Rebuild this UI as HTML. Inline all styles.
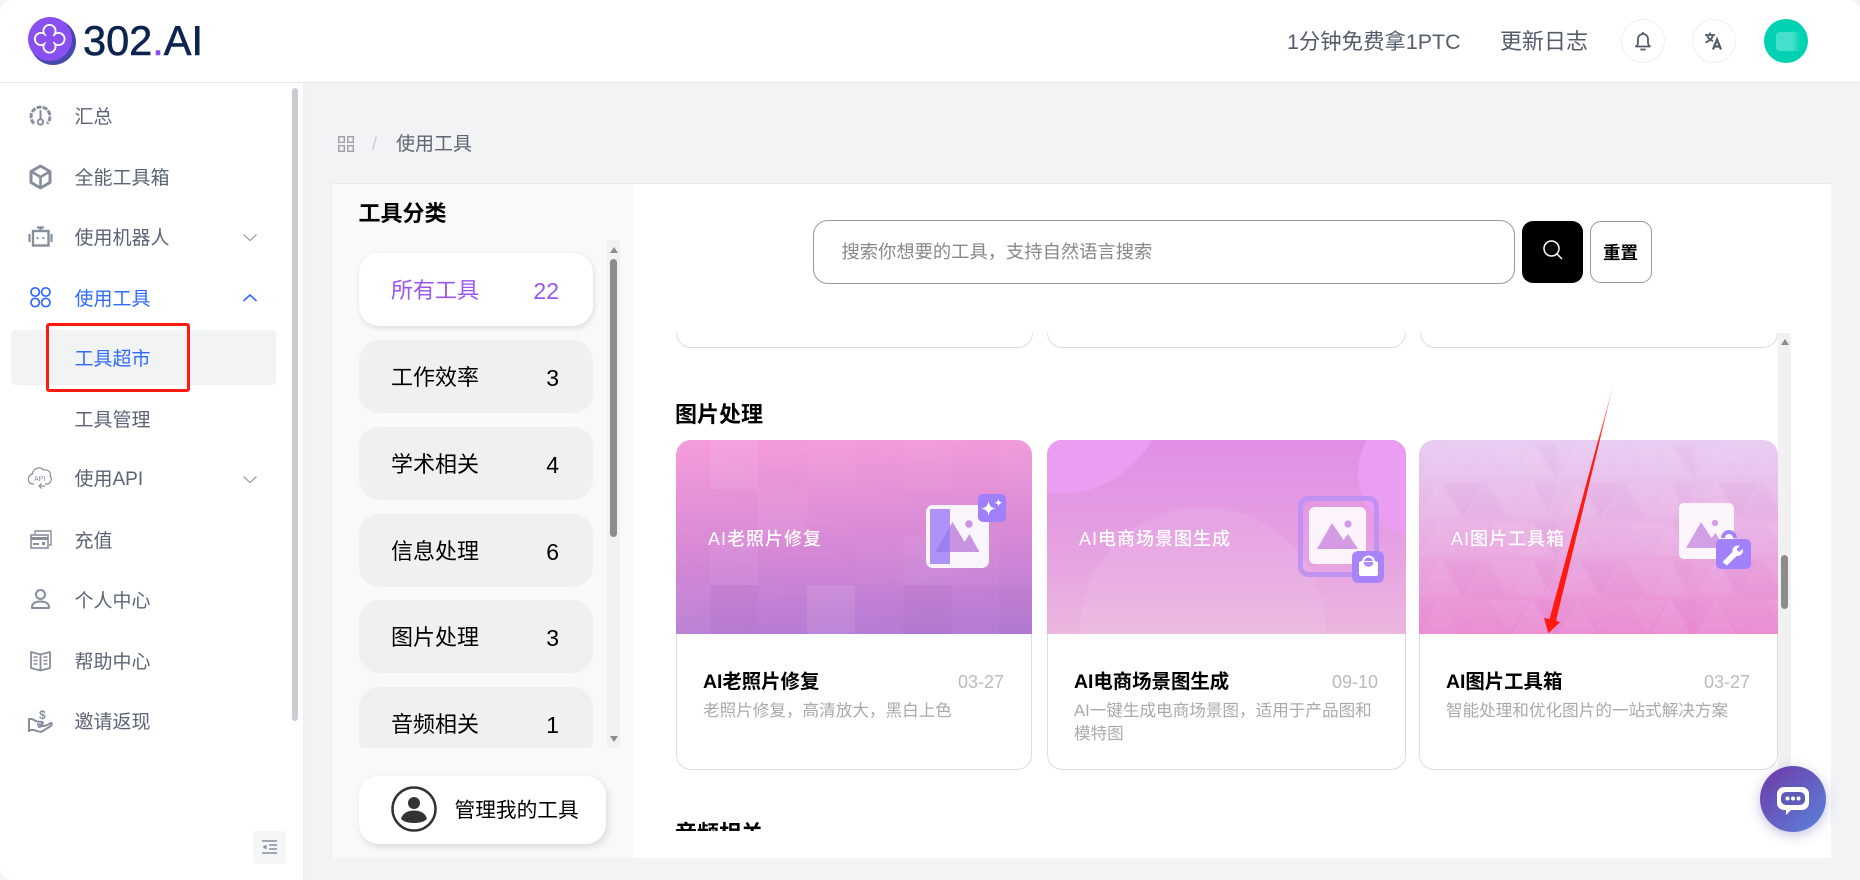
<!DOCTYPE html>
<html lang="zh-CN"><head><meta charset="utf-8"><title>302.AI</title>
<style>
*{box-sizing:border-box;margin:0;padding:0}
html,body{width:1860px;height:880px;overflow:hidden;background:#f2f3f5;font-family:"Liberation Sans","Noto Sans CJK SC",sans-serif}
.a{position:absolute;white-space:nowrap}
#hdr{left:0;top:0;width:1860px;height:83px;background:#fff;border-bottom:1px solid #e6e7ea;border-radius:12px 12px 0 0}
#side{left:0;top:83px;width:303px;height:797px;background:#fff;border-radius:0 0 0 12px}
.m{left:74.500px;font-size:19px;line-height:26px;color:#5b6474}
.blue{color:#2f6bff}
.ico{position:absolute;overflow:visible}
.cat{position:absolute;left:359px;width:234px;height:73px;border-radius:20px;background:#f0f0f0;color:#000;font-size:22px}
.cat b{font-weight:400;position:absolute;left:32px;top:22px;line-height:32px}
.cat i{font-style:normal;position:absolute;right:34px;top:22px;line-height:32px;font-size:23px}
.card{position:absolute;top:440px;height:330px;background:#fff;border-radius:15px;overflow:hidden}
.card::before{content:"";position:absolute;left:0;top:0;right:0;height:194px;border:1px solid rgba(215,215,215,.55);border-bottom:0;border-radius:15px 15px 0 0}
.card::after{content:"";position:absolute;left:0;top:194px;right:0;bottom:0;border:1px solid #dcdcdc;border-top:0;border-radius:0 0 15px 15px}
.card .t{position:absolute;left:27px;top:229px;font-size:19.400px;font-weight:700;line-height:26px;color:#000;white-space:nowrap}
.card .d{position:absolute;right:28px;top:229px;font-size:18px;line-height:26px;color:#bbb}
.card .p{position:absolute;left:27px;top:259px;right:20px;font-size:16.600px;line-height:23px;color:#aaa;white-space:normal}
.card svg{position:absolute;left:0;top:0}
.card .n{position:absolute;top:86px;font-size:18px;font-weight:500;line-height:26px;color:#fff;letter-spacing:1px;white-space:nowrap}
</style></head><body>

<div class="a" id="hdr"></div>
<svg class="ico" style="left:28px;top:17px" width="50" height="50" viewBox="28 17 50 50">
<circle cx="53" cy="42" r="23" fill="#4648ad"/><circle cx="50" cy="39" r="22" fill="#8a4ff0"/>
<g fill="#fff"><circle cx="49.500" cy="31" r="7"/><circle cx="41" cy="39" r="7"/><circle cx="58.500" cy="39" r="7"/><circle cx="49.500" cy="46.500" r="7"/></g>
<g fill="#8a4ff0"><circle cx="49.500" cy="31" r="5.200"/><circle cx="41" cy="39" r="5.200"/><circle cx="58.500" cy="39" r="5.200"/><circle cx="49.500" cy="46.500" r="5.200"/><circle cx="49.500" cy="39" r="5"/></g>
</svg>
<div class="a" style="left:83px;top:17px;font-size:41.500px;line-height:47px;color:#0d2350;-webkit-text-stroke:.6px #0d2350">302<span style="color:#8a4ff0;-webkit-text-stroke:.6px #8a4ff0">.</span>AI</div>

<div class="a" style="left:1287px;top:28px;font-size:21.400px;line-height:28px;color:#545c6b">1分钟免费拿1PTC</div>
<div class="a" style="left:1500px;top:27px;font-size:22px;line-height:30px;color:#545c6b">更新日志</div>
<div class="a" style="left:1621px;top:19px;width:44px;height:44px;border:1px solid #f0f0f2;border-radius:50%"></div>
<svg class="ico" style="left:1633px;top:31px" width="20" height="20" viewBox="0 0 20 20" fill="none" stroke="#545c6b" stroke-width="1.800"><path d="M3 15.500c1.400-1 2-2 2-4V8a5 5 0 0 1 10 0v3.500c0 2 .6 3 2 4z" stroke-linejoin="round"/><path d="M8 18.500h4" stroke-linecap="round"/><path d="M10 1v2"/></svg>
<div class="a" style="left:1692px;top:19px;width:44px;height:44px;border:1px solid #f0f0f2;border-radius:50%"></div>
<svg class="ico" style="left:1704px;top:31px" width="20" height="20" viewBox="0 0 20 20" fill="none" stroke="#545c6b" stroke-width="1.800"><path d="M1 4h10M6 1.500V4M9 4c-.8 3.500-3.500 6-7.500 7.500M3 4c.8 3 3 5 6 6"/><path d="M9 18.500l4-10 4 10M10.500 15.500h5" stroke-width="2.200"/></svg>
<div class="a" style="left:1764px;top:19px;width:44px;height:44px;border-radius:50%;background:#00d1b2"></div>
<div class="a" style="left:1776px;top:32px;width:25px;height:19px;background:linear-gradient(90deg,#45e0cc 65%,#00d1b2);border-radius:4px"></div>

<div class="a" id="side"></div>
<div class="a" style="left:303px;top:83px;width:2px;height:797px;background:#eef0f3"></div>
<div class="a" style="left:292px;top:88px;width:6px;height:633px;background:#c9ccd1;border-radius:3px"></div>
<div class="a" style="left:11px;top:330px;width:265px;height:55px;background:#f2f3f5;border-radius:4px"></div>

<div class="a m" style="top:104.500px">汇总</div>
<div class="a m" style="top:165.500px">全能工具箱</div>
<div class="a m" style="top:225.500px">使用机器人</div>
<div class="a m blue" style="top:286.500px">使用工具</div>
<div class="a m blue" style="top:346.500px">工具超市</div>
<div class="a m" style="top:407.500px">工具管理</div>
<div class="a m" style="top:467px">使用API</div>
<div class="a m" style="top:528.500px">充值</div>
<div class="a m" style="top:588.500px">个人中心</div>
<div class="a m" style="top:649.500px">帮助中心</div>
<div class="a m" style="top:709.500px">邀请返现</div>

<svg class="ico" style="left:0;top:0" width="303" height="880" viewBox="0 0 303 880" fill="none">
<g stroke="#868e9c" stroke-width="2.200">
<path d="M34 123.500a9.500 9.500 0 1 1 13 0" stroke-width="3" stroke-dasharray="5 1.200"/><path d="M40.500 110v9" stroke-width="2"/><circle cx="40.500" cy="122" r="2.700" stroke-width="2"/>
<path d="M40.500 166l9.500 5.500v11l-9.500 5.500-9.500-5.500v-11z" stroke-width="3" stroke-linejoin="round"/><path d="M32 172l8.500 5 8.500-5M40.500 177v10" stroke-width="2.600"/>
<rect x="33" y="231" width="15.500" height="14.500" stroke-width="2.400"/><path d="M40.500 231v-3M37 227.500h7M29.500 234v8M51.500 234v8"/>
<circle cx="37.500" cy="238" r="1.100" fill="#868e9c" stroke="none"/><circle cx="43.500" cy="238" r="1.100" fill="#868e9c" stroke="none"/>
</g>
<path d="M243.500 234.500l6.500 6 6.500-6" stroke="#9ca1ab" stroke-width="1.300"/>
<path d="M243.500 301l6.500-6 6.500 6" stroke="#2f6bff" stroke-width="1.600"/>
<g stroke="#2f6bff" stroke-width="1.700"><circle cx="35.200" cy="292" r="4.200"/><circle cx="45.800" cy="292" r="4.200"/><circle cx="35.200" cy="302.500" r="4.200"/><circle cx="45.800" cy="302.500" r="4.200"/></g>
<path d="M243.500 476.500l6.500 6 6.500-6" stroke="#9ca1ab" stroke-width="1.300"/>
<path d="M34 484h-1c-6 0-6-9-.5-10 .5-6 8-8 11-4 5-1 8 3 6.500 6 2.500 2 1 7-2 8h-3" stroke="#868e9c" stroke-width="1.200"/>
<text x="34" y="481" font-family="Liberation Sans" font-size="7" fill="#868e9c">API</text>
<path d="M45 486h-6M41.500 483.500l-2.500 2.500 2.500 2.500" stroke="#868e9c" stroke-width="1.200"/>
<path d="M35 534v-3h16v14h-2" stroke="#868e9c" stroke-width="1.400"/>
<rect x="31" y="535" width="17" height="13" stroke="#868e9c" stroke-width="1.600"/><rect x="31" y="537" width="17" height="3" fill="#868e9c"/><rect x="33" y="543" width="6" height="2" fill="#868e9c"/><rect x="42" y="542" width="3" height="3" fill="#868e9c"/>
<circle cx="40.500" cy="594.500" r="4.500" stroke="#868e9c" stroke-width="2"/><path d="M32 608c-.5-5 4-6.500 8.500-6.500s9 1.500 8.500 6.500z" stroke="#868e9c" stroke-width="2" stroke-linejoin="round"/>
<path d="M31 652l9.500 2.500 9.500-2.500v16l-9.500 2.500-9.500-2.500zM40.500 654.500v16" stroke="#868e9c" stroke-width="1.800" stroke-linejoin="round"/>
<path d="M33.500 657h4M33.500 660.500h4M33.500 664h4M43.500 657h4M43.500 660.500h4M43.500 664h4" stroke="#868e9c" stroke-width="1.500"/>
<path d="M29 732v-13h2c2.500 0 4 2 6 2.500l5 .5c1.500.5 1 2.500-1 2.500h-4M38 727l8-1.500 5-2.500c1.500 1 .5 3-1 3.500l-8 5c-3 1-5-.5-8-1.500h-4" stroke="#868e9c" stroke-width="2"/>
<text x="39" y="719" font-family="Liberation Sans" font-weight="700" font-size="12" fill="#868e9c">$</text>
</svg>
<div class="a" style="left:253px;top:831px;width:33px;height:33px;background:#f5f6f8;border-radius:3px"></div>
<svg class="ico" style="left:262px;top:840px" width="15" height="14" viewBox="0 0 15 14" fill="none" stroke="#868e9c" stroke-width="1.500"><path d="M0 1h15M7 5h8M7 9h8M0 13h15"/><path d="M4.500 4.500v5L.5 7z" fill="#868e9c" stroke="none"/></svg>

<div class="a" style="left:46px;top:323px;width:144px;height:69px;border:3.500px solid #ff1a10;border-radius:3px"></div>

<svg class="ico" style="left:338px;top:136px" width="16" height="16" viewBox="0 0 16 16" fill="none" stroke="#9a9fa8" stroke-width="1.400"><rect x=".7" y=".7" width="5.600" height="5.600"/><rect x="9.700" y=".7" width="5.600" height="5.600"/><rect x=".7" y="9.700" width="5.600" height="5.600"/><rect x="9.700" y="9.700" width="5.600" height="5.600"/></svg>
<div class="a" style="left:372px;top:131px;font-size:18px;line-height:26px;color:#c9ccd1">/</div>
<div class="a" style="left:396px;top:132px;font-size:19px;line-height:26px;color:#5f6673">使用工具</div>

<!-- panel -->
<div class="a" style="left:331px;top:183px;width:1500px;height:675px;background:#fff;border-top:1px solid #e9eaec"></div>
<div class="a" style="left:331px;top:183px;width:303px;height:675px;background:#f9f9f9;border-left:1px solid #e9eaec;border-top:1px solid #e9eaec"></div>
<div class="a" style="left:358.500px;top:198px;font-size:22px;font-weight:700;line-height:32px;color:#000">工具分类</div>

<div class="a" style="left:607px;top:240px;width:13px;height:508px;background:#f1f1f1"></div>
<div class="a" style="left:610px;top:259px;width:7px;height:278px;background:#8c8c8c;border-radius:4px"></div>
<div class="a" style="left:609.500px;top:247px;width:0;height:0;border:4px solid transparent;border-bottom:6px solid #8c8c8c;border-top:0"></div>
<div class="a" style="left:609.500px;top:736px;width:0;height:0;border:4px solid transparent;border-top:6px solid #8c8c8c;border-bottom:0"></div>

<div class="cat" style="top:253px;background:#fff;box-shadow:1px 2px 6px rgba(0,0,0,.12);color:#9a55f5"><b>所有工具</b><i>22</i></div>
<div class="cat" style="top:340px"><b>工作效率</b><i>3</i></div>
<div class="cat" style="top:427px"><b>学术相关</b><i>4</i></div>
<div class="cat" style="top:514px"><b>信息处理</b><i>6</i></div>
<div class="cat" style="top:600px"><b>图片处理</b><i>3</i></div>
<div class="a" style="left:359px;top:687px;width:234px;height:61px;overflow:hidden"><div class="cat" style="left:0;top:0"><b>音频相关</b><i>1</i></div></div>

<div class="a" style="left:359px;top:776px;width:247px;height:68px;background:#fff;border-radius:20px;box-shadow:2px 3px 8px rgba(0,0,0,.13)"></div>
<svg class="ico" style="left:391px;top:786px" width="46" height="46" viewBox="0 0 46 46"><circle cx="23" cy="23" r="21.500" fill="none" stroke="#333" stroke-width="2.500"/><circle cx="23" cy="17" r="6" fill="#333"/><path d="M10 33c1.500-6 7-8.500 13-8.500S34.500 27 36 33c-3 3-8 4-13 4s-10-1-13-4z" fill="#333"/></svg>
<div class="a" style="left:454.500px;top:796px;font-size:20.700px;line-height:30px;color:#000">管理我的工具</div>

<!-- search -->
<div class="a" style="left:813px;top:220px;width:702px;height:64px;border:1px solid #999;border-radius:15px;background:#fff"></div>
<div class="a" style="left:841.500px;top:238.500px;font-size:18.300px;line-height:26px;color:#888">搜索你想要的工具，支持自然语言搜索</div>
<div class="a" style="left:1522px;top:221px;width:61px;height:62px;background:#000;border-radius:11px"></div>
<svg class="ico" style="left:1542px;top:239px" width="22" height="22" viewBox="0 0 22 22" fill="none" stroke="#fff" stroke-width="1.500"><circle cx="9.500" cy="9.500" r="7.500"/><path d="M15 15l5 5"/></svg>
<div class="a" style="left:1590px;top:221px;width:62px;height:62px;border:1px solid #999;border-radius:11px;background:#fff"></div>
<div class="a" style="left:1603px;top:240px;font-size:17.500px;font-weight:700;line-height:26px;color:#000">重置</div>

<!-- scroll region -->
<div class="a" style="left:660px;top:333px;width:1118px;height:498px;overflow:hidden">
 <div class="a" style="left:15.500px;top:-100px;width:357px;height:115px;border:1px solid #dcdcdc;border-radius:15px"></div>
 <div class="a" style="left:387px;top:-100px;width:359px;height:115px;border:1px solid #dcdcdc;border-radius:15px"></div>
 <div class="a" style="left:759.500px;top:-100px;width:358.500px;height:115px;border:1px solid #dcdcdc;border-radius:15px"></div>
 <div class="a" style="left:15px;top:66px;font-size:22px;font-weight:700;line-height:32px;color:#000">图片处理</div>
 <div class="a" style="left:15px;top:485px;font-size:22px;font-weight:700;line-height:32px;color:#000">音频相关</div>
</div>

<!-- card 1 -->
<div class="card" style="left:676px;width:356px">
<svg width="356" height="194" viewBox="0 0 356 194">
<defs><linearGradient id="g1" x1=".45" y1="0" x2=".55" y2="1"><stop offset="0" stop-color="#f49bdb"/><stop offset=".5" stop-color="#d98ad6"/><stop offset="1" stop-color="#b67bd3"/></linearGradient></defs>
<rect width="356" height="194" fill="url(#g1)"/>
<g fill="#fff">
<rect x="34" y="0" width="48" height="49" opacity=".07"/><rect x="82" y="49" width="49" height="48" opacity=".06"/><rect x="34" y="97" width="48" height="48" opacity=".05"/>
<rect x="131" y="0" width="48" height="49" opacity=".03"/><rect x="131" y="145" width="48" height="49" opacity=".09"/><rect x="227" y="97" width="48" height="48" opacity=".05"/><rect x="275" y="97" width="48" height="48" opacity=".04"/>
<rect x="227" y="0" width="48" height="49" opacity=".03"/><rect x="0" y="145" width="34" height="49" opacity=".04"/><rect x="179" y="97" width="48" height="48" opacity=".02"/><rect x="323" y="0" width="33" height="49" opacity=".03"/>
</g>
<g fill="#000"><rect x="34" y="145" width="48" height="49" opacity=".015"/><rect x="227" y="145" width="48" height="49" opacity=".02"/><rect x="323" y="145" width="33" height="49" opacity=".015"/></g>
<rect x="250" y="65" width="63" height="63" rx="7" fill="#faf4fc"/>
<rect x="254" y="69" width="20" height="55" fill="#ae92fa"/>
<path d="M259 112l17.500-30 12 20 5-8 10 18z" fill="#c893e0"/><path d="M259 112l15-25.500V112z" fill="#9d7ff0"/>
<circle cx="293" cy="84" r="3.700" fill="#c893e0"/>
<rect x="302" y="54" width="28" height="28" rx="5" fill="#a07ffb"/>
<path d="M312.500 61c.9 5 1.900 6.300 7 7.500-5.100 1.200-6.100 2.500-7 7.500-.9-5-1.900-6.300-7-7.500 5.100-1.200 6.100-2.500 7-7.500z" fill="#fff"/><path d="M322.500 58.500c.4 2.700 1.100 3.600 4 4.300-2.900.7-3.600 1.600-4 4.300-.4-2.700-1.100-3.600-4-4.300 2.900-.7 3.600-1.600 4-4.300z" fill="#fff"/>
</svg>
<div class="n" style="left:32px">AI老照片修复</div>
<div class="t">AI老照片修复</div><div class="d">03-27</div>
<div class="p">老照片修复，高清放大，黑白上色</div>
</div>

<!-- card 2 -->
<div class="card" style="left:1047px;width:359px">
<svg width="359" height="194" viewBox="0 0 359 194">
<defs><linearGradient id="g2" x1=".5" y1="0" x2=".5" y2="1"><stop offset="0" stop-color="#df8fe5"/><stop offset=".6" stop-color="#e6a3e2"/><stop offset="1" stop-color="#ecb6de"/></linearGradient></defs>
<rect width="359" height="194" fill="url(#g2)"/>
<circle cx="12" cy="-53" r="107" fill="#eb9df1"/><circle cx="376" cy="33" r="65" fill="#eb9df1"/><circle cx="156" cy="190" r="123" fill="#fff" opacity=".08"/>
<rect x="253.500" y="58.500" width="76" height="76" rx="8" fill="none" stroke="#b78df5" stroke-opacity=".8" stroke-width="5"/>
<rect x="262" y="67" width="57" height="57" rx="6" fill="#fcf3fc"/>
<path d="M270 109l15-26 11.500 17 4.500-6 10 15z" fill="#d49ae4"/><circle cx="301" cy="84" r="3.600" fill="#d49ae4"/>
<rect x="305" y="111" width="32" height="32" rx="6" fill="#a884fb"/>
<path d="M312 122l3-1h13l3 1v12a2 2 0 0 1-2 2h-15a2 2 0 0 1-2-2z" fill="#fff"/>
<path d="M316 122a5.500 5.500 0 0 1 11 0" fill="none" stroke="#fff" stroke-width="2"/><path d="M316.500 122a5 5 0 0 0 10 0z" fill="#b28ff8"/>
</svg>
<div class="n" style="left:32px">AI电商场景图生成</div>
<div class="t">AI电商场景图生成</div><div class="d">09-10</div>
<div class="p">AI一键生成电商场景图，适用于产品图和模特图</div>
</div>

<!-- card 3 -->
<div class="card" style="left:1419px;width:359px">
<svg width="359" height="194" viewBox="0 0 359 194">
<defs><linearGradient id="g3" x1=".5" y1="0" x2=".5" y2="1"><stop offset="0" stop-color="#e8cdf1"/><stop offset=".45" stop-color="#e9b2e4"/><stop offset="1" stop-color="#ea8ad2"/></linearGradient>
<pattern id="tri" width="138" height="78" patternUnits="userSpaceOnUse" y="2">
<g fill="#fff"><path d="M1 36L21 1l20 35z" opacity=".06"/><path d="M47 36L67 1l20 35z" opacity=".03"/><path d="M93 36l20-35 20 35z" opacity=".07"/>
<path d="M24 2h40L44 37z" opacity=".03"/><path d="M70 2h40L90 37z" opacity=".06"/></g>
<g fill="#b23bb5"><path d="M116 2h22v35z" opacity=".04"/><path d="M24 41h40L44 76z" opacity=".06"/><path d="M116 41h22L127 76z" opacity=".04"/><path d="M47 75L67 40l20 35z" opacity=".03"/></g>
<g fill="#fff"><path d="M1 75L21 40l20 35z" opacity=".05"/><path d="M70 41h40L90 76z" opacity=".03"/><path d="M93 75l20-35 20 35z" opacity=".06"/></g>
</pattern></defs>
<rect width="359" height="194" fill="url(#g3)"/><rect width="359" height="194" fill="url(#tri)"/>
<rect x="260" y="63" width="55" height="56" rx="5" fill="#fcf6fc"/>
<path d="M267 108l15-26 10.500 16 4-5 9 15z" fill="#d39fe5"/><circle cx="296" cy="83" r="3.200" fill="#d39fe5"/>
<path d="M304 98a6 6 0 0 1 12 0" fill="none" stroke="#a384fb" stroke-width="4"/>
<rect x="297" y="99" width="35" height="30" rx="5" fill="#a080fb"/>
<path d="M304 122l10-10c-1-3 1.500-6.500 6-6l-3 3.500 3 3 3.500-3c.5 4-3 7-6 6l-9.500 9.500z" fill="#fff" stroke="#fff" stroke-width=".8"/>
</svg>
<div class="n" style="left:32px">AI图片工具箱</div>
<div class="t">AI图片工具箱</div><div class="d">03-27</div>
<div class="p">智能处理和优化图片的一站式解决方案</div>
</div>

<!-- right scrollbar -->
<div class="a" style="left:1778px;top:333px;width:13px;height:498px;background:#f1f1f1"></div>
<div class="a" style="left:1781px;top:555px;width:7px;height:54px;background:#8c8c8c;border-radius:4px"></div>
<div class="a" style="left:1780.500px;top:339px;width:0;height:0;border:4px solid transparent;border-bottom:6px solid #8c8c8c;border-top:0"></div>

<!-- arrow -->
<svg class="ico" style="left:0;top:0" width="1860" height="880" viewBox="0 0 1860 880"><defs><linearGradient id="ar" x1="1614" y1="382" x2="1548" y2="633" gradientUnits="userSpaceOnUse"><stop offset="0" stop-color="#ff1a10" stop-opacity=".15"/><stop offset=".25" stop-color="#ff1a10"/></linearGradient></defs>
<path d="M1614 382L1556 620.500 1560 622.300 1548.300 633.300 1544 618 1549.500 619z" fill="url(#ar)"/></svg>

<!-- chat -->
<div class="a" style="left:1760px;top:766px;width:66px;height:66px;border-radius:50%;background:linear-gradient(135deg,#6f38a6,#5a84dc);box-shadow:0 3px 12px rgba(80,80,160,.35)"></div>
<svg class="ico" style="left:1776px;top:786px" width="34" height="30" viewBox="0 0 34 30"><path d="M8 1h18a7 7 0 0 1 7 7v9a7 7 0 0 1-7 7H15l-5 5v-5H8a7 7 0 0 1-7-7V8a7 7 0 0 1 7-7z" fill="#fff"/><rect x="5" y="6" width="24" height="13" rx="5" fill="#5f5cb8"/><circle cx="11.500" cy="12.500" r="2" fill="#fff"/><circle cx="17" cy="12.500" r="2" fill="#fff"/><circle cx="22.500" cy="12.500" r="2" fill="#fff"/></svg>
</body></html>
